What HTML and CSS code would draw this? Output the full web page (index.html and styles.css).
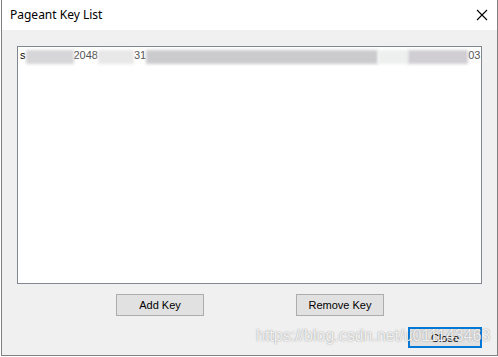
FILE: index.html
```html
<!DOCTYPE html>
<html>
<head>
<meta charset="utf-8">
<link rel="stylesheet" href="styles.css">
</head>
<body>
<div class="window">
  <div class="titlebar">
    <span class="title">Pageant Key List</span>
    <svg class="close-x" width="12" height="12" viewBox="0 0 12 12"><path d="M1 1 L11 11 M11 1 L1 11" stroke="#000" stroke-width="1.1" fill="none"/></svg>
  </div>
  <div class="content">
    <div class="listbox">
      <div class="item"><span>s</span><span class="mask m1"></span><span class="part">2048</span><span class="mask m2"></span><span class="part">31</span><span class="mask m3"></span><span class="mask m5"></span><span class="mask m4"></span><span class="part">03</span></div>
    </div>
    <div class="btnrow">
      <button class="btn">Add Key</button>
      <button class="btn">Remove Key</button>
    </div>
    <div class="closerow">
      <button class="btn close-btn">Close</button>
    </div>
  </div>
  <div class="watermark">https://blog.csdn.net/u011143463</div>
</div>
</body>
</html>
```

FILE: styles.css
```css
html, body {
  margin: 0;
  padding: 0;
  background: #ffffff;
}
body {
  padding-left: 1px;
}
.window {
  position: relative;
  width: 495px;
  height: 355px;
  border-left: 1px solid #808080;
  border-right: 1px solid #808080;
  border-bottom: 1px solid #808080;
  display: flex;
  flex-direction: column;
  overflow: hidden;
}
.titlebar {
  height: 30px;
  background: #ffffff;
  display: flex;
  align-items: center;
  justify-content: space-between;
  padding: 0 9px 0 8px;
}
.title {
  font-family: "Segoe UI", "Noto Sans", sans-serif;
  font-size: 12px;
  color: #000;
  padding-bottom: 1px;
}
.close-x {
  display: block;
  margin-top: -1px;
}
.content {
  flex: 1;
  background: #f0f0f0;
  padding: 16px 15px 0 15px;
  display: flex;
  flex-direction: column;
}
.listbox {
  width: 463px;
  height: 236px;
  border: 1px solid #828790;
  background: #ffffff;
}
.item {
  font-family: "Liberation Sans", Arial, sans-serif;
  font-size: 11px;
  color: #000;
  padding: 2px 0 0 2px;
  height: 13px;
  line-height: 13px;
  display: flex;
  white-space: nowrap;
}
.mask {
  display: inline-block;
  flex-shrink: 0;
  height: 14px;
  margin-top: 1px;
  background: #cfcfd2;
  filter: blur(1.5px);
}
.m1 { width: 48px; background: #d6d6d8; }
.m2 { width: 36px; background: #e8e8e8; }
.m3 { width: 232px; background: #cbcbce; }
.m5 { width: 30px; background: #eef0f0; }
.m4 { width: 60px; background: #d0ced2; }
.part {
  color: #555;
}
.btnrow {
  display: flex;
  gap: 92px;
  margin-top: 10px;
  margin-left: 99px;
}
.btn {
  width: 88px;
  height: 22px;
  background: #e1e1e1;
  border: 1px solid #adadad;
  font-family: "Liberation Sans", Arial, sans-serif;
  font-size: 11px;
  color: #000;
  padding: 0;
  margin: 0;
}
.closerow {
  display: flex;
  justify-content: flex-end;
  margin-top: 11px;
}
.close-btn {
  width: 74px;
  height: 21px;
  border: 2px solid #0078d7;
}
.watermark {
  position: absolute;
  left: 254px;
  top: 327px;
  font-family: "Liberation Sans", Arial, sans-serif;
  font-size: 16px;
  color: rgba(255, 255, 255, 0.85);
  text-shadow: 0 0 1.5px rgba(110, 110, 110, 0.8);
  white-space: nowrap;
  pointer-events: none;
}
```
